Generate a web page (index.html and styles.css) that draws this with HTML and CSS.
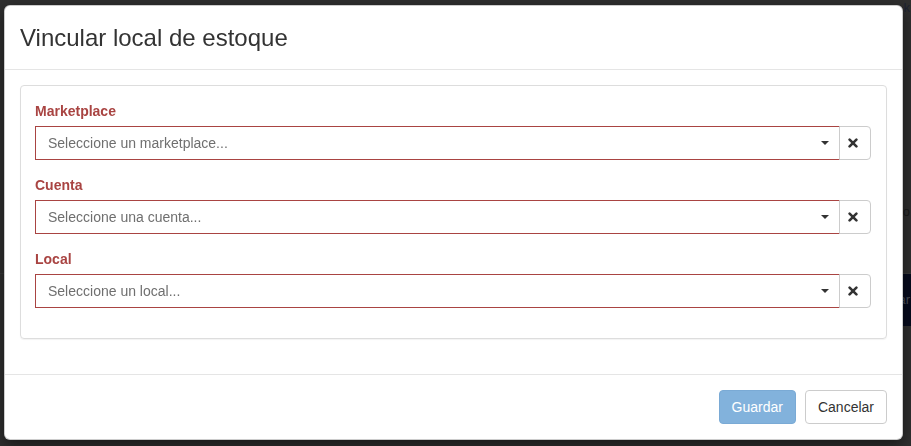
FILE: index.html
```html
<!DOCTYPE html>
<html lang="es">
<head>
<meta charset="utf-8">
<title>Vincular local de estoque</title>
<link rel="stylesheet" href="styles.css">
</head>
<body>
<div class="page">
  <div class="page-top"><span class="page-k">k</span></div>
  <div class="page-mid"><span class="page-o">o</span></div>
  <div class="page-bar"><span>ar</span></div>
</div>
<div class="modal" role="dialog">
  <div class="modal-header">
    <h4 class="modal-title">Vincular local de estoque</h4>
  </div>
  <div class="modal-body">
    <div class="panel">
      <div class="form-group">
        <label class="control-label">Marketplace</label>
        <div class="input-group">
          <div class="select">
            <span class="placeholder">Seleccione un marketplace...</span>
            <span class="caret"></span>
          </div>
          <button class="clear-btn" type="button" aria-label="Limpiar">
            <svg width="10" height="10" viewBox="0 0 10 10"><path d="M1.6 1.6 L8.4 8.4 M8.4 1.6 L1.6 8.4" stroke="#333" stroke-width="2.6" stroke-linecap="round"/></svg>
          </button>
        </div>
      </div>
      <div class="form-group">
        <label class="control-label">Cuenta</label>
        <div class="input-group">
          <div class="select">
            <span class="placeholder">Seleccione una cuenta...</span>
            <span class="caret"></span>
          </div>
          <button class="clear-btn" type="button" aria-label="Limpiar">
            <svg width="10" height="10" viewBox="0 0 10 10"><path d="M1.6 1.6 L8.4 8.4 M8.4 1.6 L1.6 8.4" stroke="#333" stroke-width="2.6" stroke-linecap="round"/></svg>
          </button>
        </div>
      </div>
      <div class="form-group">
        <label class="control-label">Local</label>
        <div class="input-group">
          <div class="select">
            <span class="placeholder">Seleccione un local...</span>
            <span class="caret"></span>
          </div>
          <button class="clear-btn" type="button" aria-label="Limpiar">
            <svg width="10" height="10" viewBox="0 0 10 10"><path d="M1.6 1.6 L8.4 8.4 M8.4 1.6 L1.6 8.4" stroke="#333" stroke-width="2.6" stroke-linecap="round"/></svg>
          </button>
        </div>
      </div>
    </div>
  </div>
  <div class="modal-footer">
    <button class="btn btn-primary" type="button" disabled>Guardar</button>
    <button class="btn btn-default" type="button">Cancelar</button>
  </div>
</div>
</body>
</html>
```
FILE: styles.css
```css
* { box-sizing: border-box; }

html, body {
  margin: 0;
  height: 100%;
}

body {
  background: #2f2f2f;
  font-family: "Liberation Sans", Arial, sans-serif;
  font-size: 14px;
  line-height: 20px;
  color: #333;
  overflow: hidden;
}

/* page behind the backdrop */
.page {
  display: flex;
  flex-direction: column;
  height: 100%;
}
.page-top {
  height: 26px;
  display: flex;
  justify-content: flex-end;
  align-items: flex-start;
  padding-right: 1px;
}
.page-k {
  color: #1d2333;
  font-size: 13px;
  line-height: 16px;
}
.page-mid {
  height: 248px;
  display: flex;
  justify-content: flex-end;
  align-items: flex-start;
  border-bottom: 1px solid #383838;
  padding-top: 178px;
}
.page-o {
  color: #1b1b1b;
  font-size: 13px;
  line-height: 16px;
  padding-right: 1px;
}
.page-bar {
  align-self: flex-end;
  width: 200px;
  height: 52px;
  background: #060b1d;
  display: flex;
  justify-content: flex-end;
  align-items: center;
}
.page-bar span {
  color: #4b4e58;
  font-size: 13px;
  padding-right: 1px;
}

/* modal overlay */
.modal {
  position: fixed;
  top: 5px;
  left: 4px;
  width: 899px;
  background: #fff;
  border: 1px solid rgba(0, 0, 0, 0.2);
  border-radius: 6px;
  box-shadow: 0 5px 15px rgba(0, 0, 0, 0.5);
}

.modal-header {
  padding: 15px;
  border-bottom: 1px solid #e5e5e5;
}
.modal-title {
  margin: 0;
  font-size: 24px;
  line-height: 33px;
  font-weight: normal;
  color: #333;
}

.modal-body {
  padding: 15px;
}

.panel {
  border: 1px solid #ddd;
  border-radius: 4px;
  box-shadow: 0 1px 1px rgba(0, 0, 0, 0.05);
  padding: 15px 15px 15px 14px;
  margin-bottom: 20px;
}

.form-group {
  margin-bottom: 15px;
}

.control-label {
  display: block;
  margin-bottom: 5px;
  font-weight: bold;
  color: #a94442;
}

.input-group {
  display: flex;
  height: 34px;
}

.select {
  flex: 1;
  display: flex;
  align-items: center;
  border: 1px solid #a94442;
  padding: 0 10px 0 12px;
  background: #fff;
}
.placeholder {
  flex: 1;
  color: #6f6f6f;
}
.caret {
  width: 0;
  height: 0;
  border-left: 4px solid transparent;
  border-right: 4px solid transparent;
  border-top: 4px solid #333;
}

.clear-btn {
  width: 32px;
  margin-left: -1px;
  border: 1px solid #ccc;
  border-radius: 0 4px 4px 0;
  background: #fff;
  display: flex;
  align-items: center;
  justify-content: center;
  padding: 0 5px 0 0;
}
.clear-btn svg { display: block; }

.modal-footer {
  padding: 15px;
  border-top: 1px solid #e5e5e5;
  display: flex;
  justify-content: flex-end;
  gap: 9px;
}

.btn {
  font-family: "Liberation Sans", Arial, sans-serif;
  font-size: 14px;
  line-height: 20px;
  padding: 6px 12px;
  border: 1px solid transparent;
  border-radius: 4px;
  height: 34px;
}
.btn-primary {
  background: #82b2dc;
  border-color: #7aaad5;
  color: #fff;
}
.btn-default {
  background: #fff;
  border-color: #ccc;
  color: #333;
}
```
